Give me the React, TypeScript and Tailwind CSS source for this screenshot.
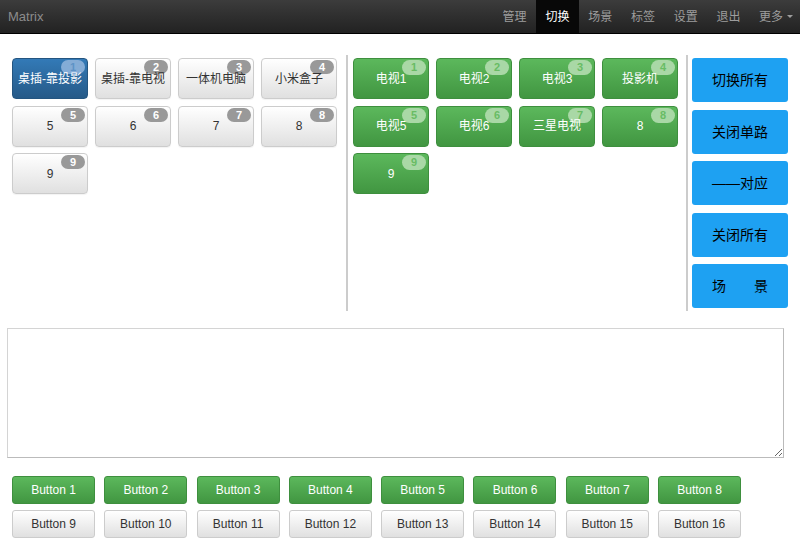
import React from "react";

const font = { fontFamily: '"Liberation Sans", "Noto Sans CJK SC", sans-serif' };

const sources = ["桌插-靠投影", "桌插-靠电视", "一体机电脑", "小米盒子", "5", "6", "7", "8", "9"];
const outputs = ["电视1", "电视2", "电视3", "投影机", "电视5", "电视6", "三星电视", "8", "9"];
const actions = ["切换所有", "关闭单路", "——对应", "关闭所有", "场　　景"];
const navItems = ["管理", "切换", "场景", "标签", "设置", "退出"];

function SourceButton({ label, index, active }: { label: string; index: number; active: boolean }) {
  return (
    <button
      className={`relative w-[76px] h-[41px] rounded-[4px] border text-[12px] leading-none ${
        active
          ? "bg-linear-to-b from-[#337ab7] to-[#265a88] border-[#245580] text-white"
          : "bg-linear-to-b from-white to-[#e0e0e0] border-[#ccc] text-[#333] shadow-[0_1px_1px_rgba(0,0,0,0.05)]"
      }`}
    >
      <span
        className={`absolute top-[1px] right-[2px] w-[24px] h-[14px] rounded-full text-[11px] font-bold leading-[14px] ${
          active ? "bg-[#84acd6] text-[#5d93c6]" : "bg-[#999] text-white"
        }`}
      >
        {index}
      </span>
      <span className="relative">{label}</span>
    </button>
  );
}

function OutputButton({ label, index }: { label: string; index: number }) {
  return (
    <button className="relative w-[76px] h-[41px] rounded-[4px] border border-[#3e8f3e] bg-linear-to-b from-[#5cb85c] to-[#419641] text-white text-[12px] leading-none">
      <span className="absolute top-[1px] right-[2px] w-[24px] h-[15px] rounded-full bg-[#a9d8a6] text-[#68bc64] text-[11px] font-bold leading-[15px]">
        {index}
      </span>
      <span className="relative">{label}</span>
    </button>
  );
}

export default function App() {
  return (
    <div className="w-[800px] h-[547px] bg-white overflow-hidden" style={font}>
      {/* Navbar */}
      <div className="h-[34px] flex items-stretch justify-between bg-linear-to-b from-[#3c3c3c] to-[#222] border-b border-black">
        <div className="pl-[8px] flex items-center text-[13px] text-[#8c8c8c]">Matrix</div>
        <div className="flex items-stretch text-[12px] text-[#9d9d9d]">
          {navItems.map((n) => (
            <div
              key={n}
              className={`px-[9.4px] flex items-center ${n === "切换" ? "bg-[#080808] text-white" : ""}`}
            >
              {n}
            </div>
          ))}
          <div className="pl-[9px] pr-[7px] flex items-center gap-[4px]">
            更多
            <span className="w-0 h-0 border-l-[3px] border-r-[3px] border-t-[3px] border-l-transparent border-r-transparent border-t-[#9d9d9d]" />
          </div>
        </div>
      </div>

      {/* Matrix panels */}
      <div className="flex pt-[21px]">
        <div className="w-[348px] h-[256px] border-r-2 border-[#ccc] pl-[12px] pt-[3px]">
          <div className="grid grid-cols-[repeat(4,76px)] gap-x-[7px] gap-y-[6.5px]">
            {sources.map((s, i) => (
              <SourceButton key={i} label={s} index={i + 1} active={i === 0} />
            ))}
          </div>
        </div>
        <div className="w-[340px] h-[256px] border-r-2 border-[#ccc] pl-[5px] pt-[3px]">
          <div className="grid grid-cols-[repeat(4,76px)] gap-x-[7px] gap-y-[6.5px]">
            {outputs.map((s, i) => (
              <OutputButton key={i} label={s} index={i + 1} />
            ))}
          </div>
        </div>
        <div className="pl-[4px] pt-[3px] flex flex-col gap-[7.5px]">
          {actions.map((a) => (
            <button
              key={a}
              className="w-[96px] h-[44px] rounded-[3px] bg-[#1ea1f2] text-black text-[14px] leading-none"
            >
              {a}
            </button>
          ))}
        </div>
      </div>

      {/* Log area */}
      <div className="pl-[7px] pt-[17px]">
        <textarea className="block w-[777px] h-[130px] border border-[#bbb] border-t-[#d4d4d4] border-l-[#d4d4d4] bg-white outline-none resize" />
      </div>

      {/* Button rows */}
      <div className="pl-[12px] pt-[18px] flex flex-col gap-[6px]">
        <div className="flex gap-[9.3px]">
          {Array.from({ length: 8 }, (_, i) => (
            <button
              key={i}
              className="w-[83px] h-[28px] rounded-[3px] border border-[#3e8f3e] bg-linear-to-b from-[#5cb85c] to-[#419641] text-white text-[12px]"
            >
              Button {i + 1}
            </button>
          ))}
        </div>
        <div className="flex gap-[9.3px]">
          {Array.from({ length: 8 }, (_, i) => (
            <button
              key={i}
              className="w-[83px] h-[28px] rounded-[3px] border border-[#ccc] bg-linear-to-b from-white to-[#e0e0e0] text-[#333] text-[12px]"
            >
              Button {i + 9}
            </button>
          ))}
        </div>
      </div>
    </div>
  );
}
